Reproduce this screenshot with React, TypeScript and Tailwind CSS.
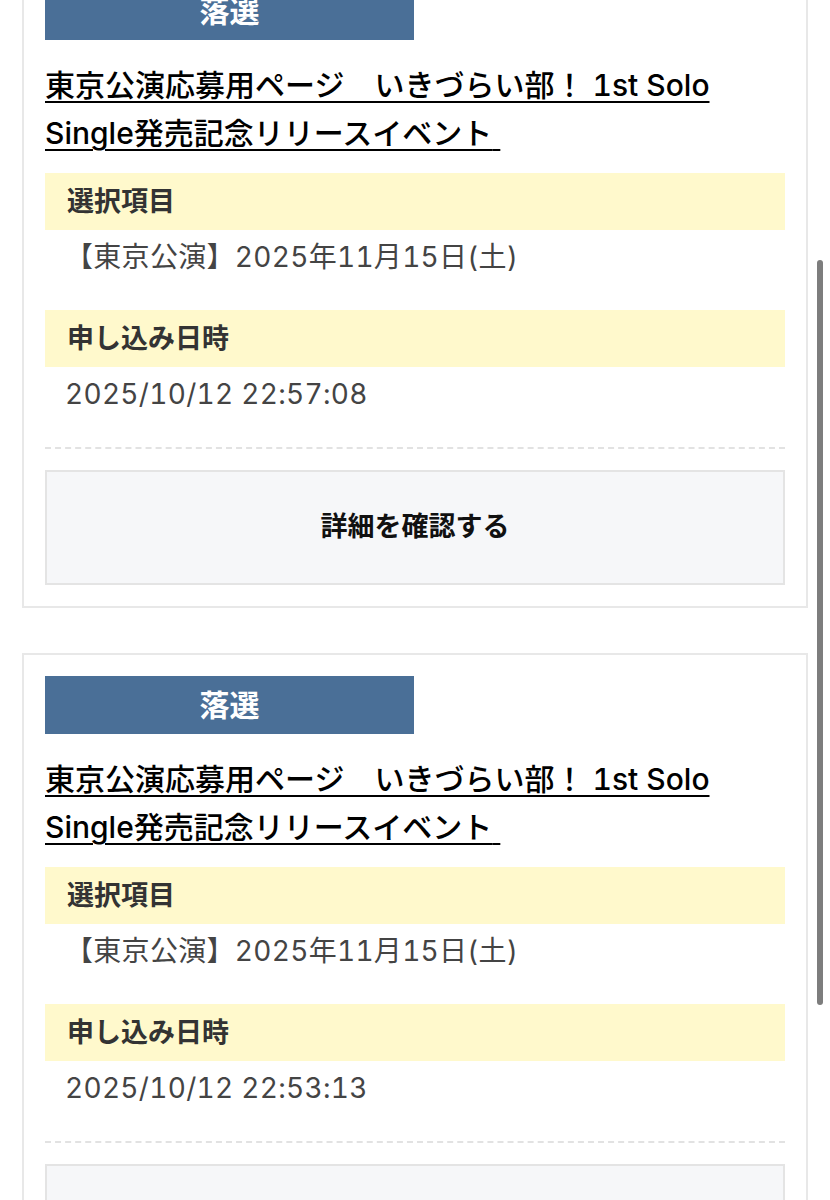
import React from "react";

type Entry = {
  status: string;
  titleTop: string;
  titleBottom: string;
  choice: string;
  appliedAt: string;
};

const entries: Entry[] = [
  {
    status: "落選",
    titleTop: "東京公演応募用ページ　いきづらい部！ 1st Solo",
    titleBottom: "Single発売記念リリースイベント",
    choice: "【東京公演】2025年11月15日(土)",
    appliedAt: "2025/10/12 22:57:08",
  },
  {
    status: "落選",
    titleTop: "東京公演応募用ページ　いきづらい部！ 1st Solo",
    titleBottom: "Single発売記念リリースイベント",
    choice: "【東京公演】2025年11月15日(土)",
    appliedAt: "2025/10/12 22:53:13",
  },
];

function Field({ label, value }: { label: string; value: string }) {
  return (
    <div>
      <div className="h-[57px] bg-[#fff9cc] px-[22px] text-[27px] font-bold leading-[57px] text-[#333]">
        {label}
      </div>
      <div className="pb-[36px] pl-[20px] pt-[10px] text-[28px] leading-[34px] tracking-[0.3px] text-[#444] tabular-nums">
        {value}
      </div>
    </div>
  );
}

function EntryCard({ entry }: { entry: Entry }) {
  return (
    <div className="border-2 border-[#e8e8e8] bg-white px-[21px] pb-[21px] pt-[21px]">
      <div className="h-[58px] w-[369px] bg-[#4a6f97] text-center text-[30px] font-bold leading-[58px] text-white">
        {entry.status}
      </div>
      <a
        href="#"
        className="mb-[16px] mt-[21px] block text-[30px] font-medium leading-[48px] text-black underline decoration-2 underline-offset-[5px] tabular-nums"
      >
        {entry.titleTop}
        <br />
        {entry.titleBottom}&nbsp;
      </a>
      <Field label="選択項目" value={entry.choice} />
      <Field label="申し込み日時" value={entry.appliedAt} />
      <div className="border-t-2 border-dashed border-[#e2e2e2]" />
      <button className="mt-[21px] flex h-[115px] w-full items-center justify-center border-2 border-[#e4e4e4] bg-[#f6f7f9] text-[27px] font-bold text-[#111]">
        詳細を確認する
      </button>
    </div>
  );
}

export default function App() {
  return (
    <div
      className="relative h-[1200px] overflow-hidden bg-white"
      style={{ fontFamily: 'Inter, "Noto Sans CJK JP", sans-serif' }}
    >
      <div className="-mt-[41px] flex flex-col gap-[45px] px-[22px]">
        {entries.map((entry, i) => (
          <EntryCard key={i} entry={entry} />
        ))}
      </div>
      <div className="absolute left-[817px] top-[260px] h-[745px] w-[6px] rounded-full bg-[#7d7d7d]" />
    </div>
  );
}
